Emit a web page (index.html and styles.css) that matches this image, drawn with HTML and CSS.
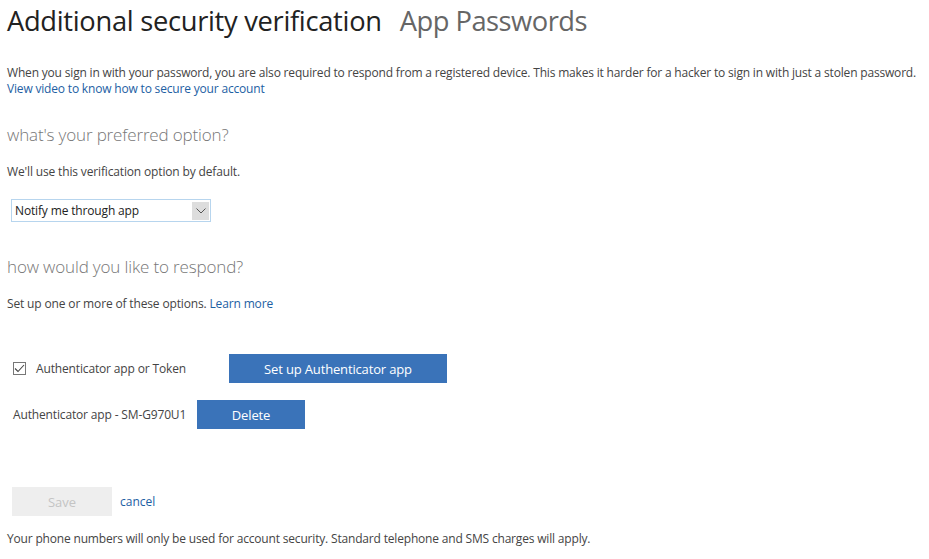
FILE: index.html
```html
<!DOCTYPE html>
<html>
<head>
<meta charset="utf-8">
<link rel="stylesheet" href="styles.css">
</head>
<body>
<div class="page">
  <h1 class="title"><span class="title-main">Additional security verification</span><span class="title-alt">App Passwords</span></h1>
  <p class="intro">When you sign in with your password, you are also required to respond from a registered device. This makes it harder for a hacker to sign in with just a stolen password.<br><a class="link" href="#">View video to know how to secure your account</a></p>

  <h2 class="section">what's your preferred option?</h2>
  <p class="text">We'll use this verification option by default.</p>
  <div class="select">
    <span class="select-value">Notify me through app</span>
    <span class="select-arrow"><svg width="10" height="6" viewBox="0 0 10 6"><path d="M0.5 0.5 L5 5 L9.5 0.5" fill="none" stroke="#555" stroke-width="1"/></svg></span>
  </div>

  <h2 class="section section-2">how would you like to respond?</h2>
  <p class="text">Set up one or more of these options. <a class="link" href="#">Learn more</a></p>

  <div class="row row-auth">
    <label class="check-label"><span class="checkbox"><svg width="11" height="9" viewBox="0 0 11 9"><path d="M1 4.5 L4 7.5 L10 1" fill="none" stroke="#444" stroke-width="1.1"/></svg></span>Authenticator app or Token</label>
    <button class="btn btn-setup">Set up Authenticator app</button>
  </div>
  <div class="row row-device">
    <span class="device">Authenticator app - SM-G970U1</span>
    <button class="btn btn-delete">Delete</button>
  </div>

  <div class="actions">
    <button class="btn-save">Save</button>
    <a class="link cancel" href="#">cancel</a>
  </div>
  <p class="footer">Your phone numbers will only be used for account security. Standard telephone and SMS charges will apply.</p>
</div>
</body>
</html>
```
FILE: styles.css
```css
html, body {
  margin: 0;
  padding: 0;
  background: #fff;
}
body {
  font-family: "Open Sans", "Noto Sans", sans-serif;
  color: #444;
  font-size: 12px;
}
.page {
  padding: 0 7px;
}
.title {
  margin: 0;
  padding-top: 3px;
  font-weight: 400;
  font-size: 27.3px;
  line-height: 36px;
  letter-spacing: -0.3px;
}
.title-main {
  color: #222;
}
.title-alt {
  color: #666;
  margin-left: 18px;
  letter-spacing: -0.5px;
}
.intro {
  margin: 26px 0 0;
  line-height: 16px;
  font-size: 12px;
  letter-spacing: -0.18px;
}
.link {
  color: #1d60a3;
  text-decoration: none;
}
.section {
  margin: 26px 0 0;
  font-weight: 300;
  font-size: 17px;
  line-height: 24px;
  color: #777;
  letter-spacing: -0.15px;
}
.section-2 {
  margin-top: 33px;
}
.text {
  margin: 17px 0 0;
  font-size: 12px;
  line-height: 16px;
  letter-spacing: -0.15px;
}
.select {
  box-sizing: border-box;
  margin: 19px 0 0 4px;
  width: 200px;
  height: 23px;
  border: 1px solid #b7d5ee;
  display: flex;
  align-items: center;
  justify-content: space-between;
}
.select-value {
  padding-left: 3px;
  color: #222;
  font-size: 12px;
  letter-spacing: -0.15px;
}
.select-arrow {
  width: 17px;
  height: 18px;
  margin-right: 1px;
  background: #ddd;
  display: flex;
  align-items: center;
  justify-content: center;
}
.row {
  display: flex;
  align-items: center;
}
.row-auth {
  margin-top: 42px;
  padding-left: 6px;
}
.check-label {
  display: flex;
  align-items: center;
  width: 216px;
  color: #444;
  font-size: 12px;
  letter-spacing: -0.15px;
}
.checkbox {
  width: 11px;
  height: 11px;
  border: 1px solid #777;
  margin-right: 10px;
  display: flex;
  align-items: center;
  justify-content: center;
}
.btn {
  border: none;
  background: #3a73b9;
  color: #fff;
  font-family: inherit;
  font-size: 13px;
  letter-spacing: -0.15px;
  height: 29px;
  padding: 0;
}
.btn-setup {
  width: 218px;
}
.row-device {
  margin-top: 17px;
  padding-left: 6px;
}
.device {
  width: 184px;
  font-size: 12px;
  letter-spacing: -0.15px;
}
.btn-delete {
  width: 108px;
}
.actions {
  margin-top: 58px;
  padding-left: 5px;
  display: flex;
  align-items: center;
}
.btn-save {
  width: 100px;
  height: 29px;
  border: none;
  background: #eee;
  color: #c4c4c4;
  font-family: inherit;
  font-size: 13px;
  padding: 0;
}
.cancel {
  margin-left: 8px;
  font-size: 12px;
}
.footer {
  margin: 15px 0 0;
  font-size: 12px;
  line-height: 16px;
  letter-spacing: -0.18px;
}
```
